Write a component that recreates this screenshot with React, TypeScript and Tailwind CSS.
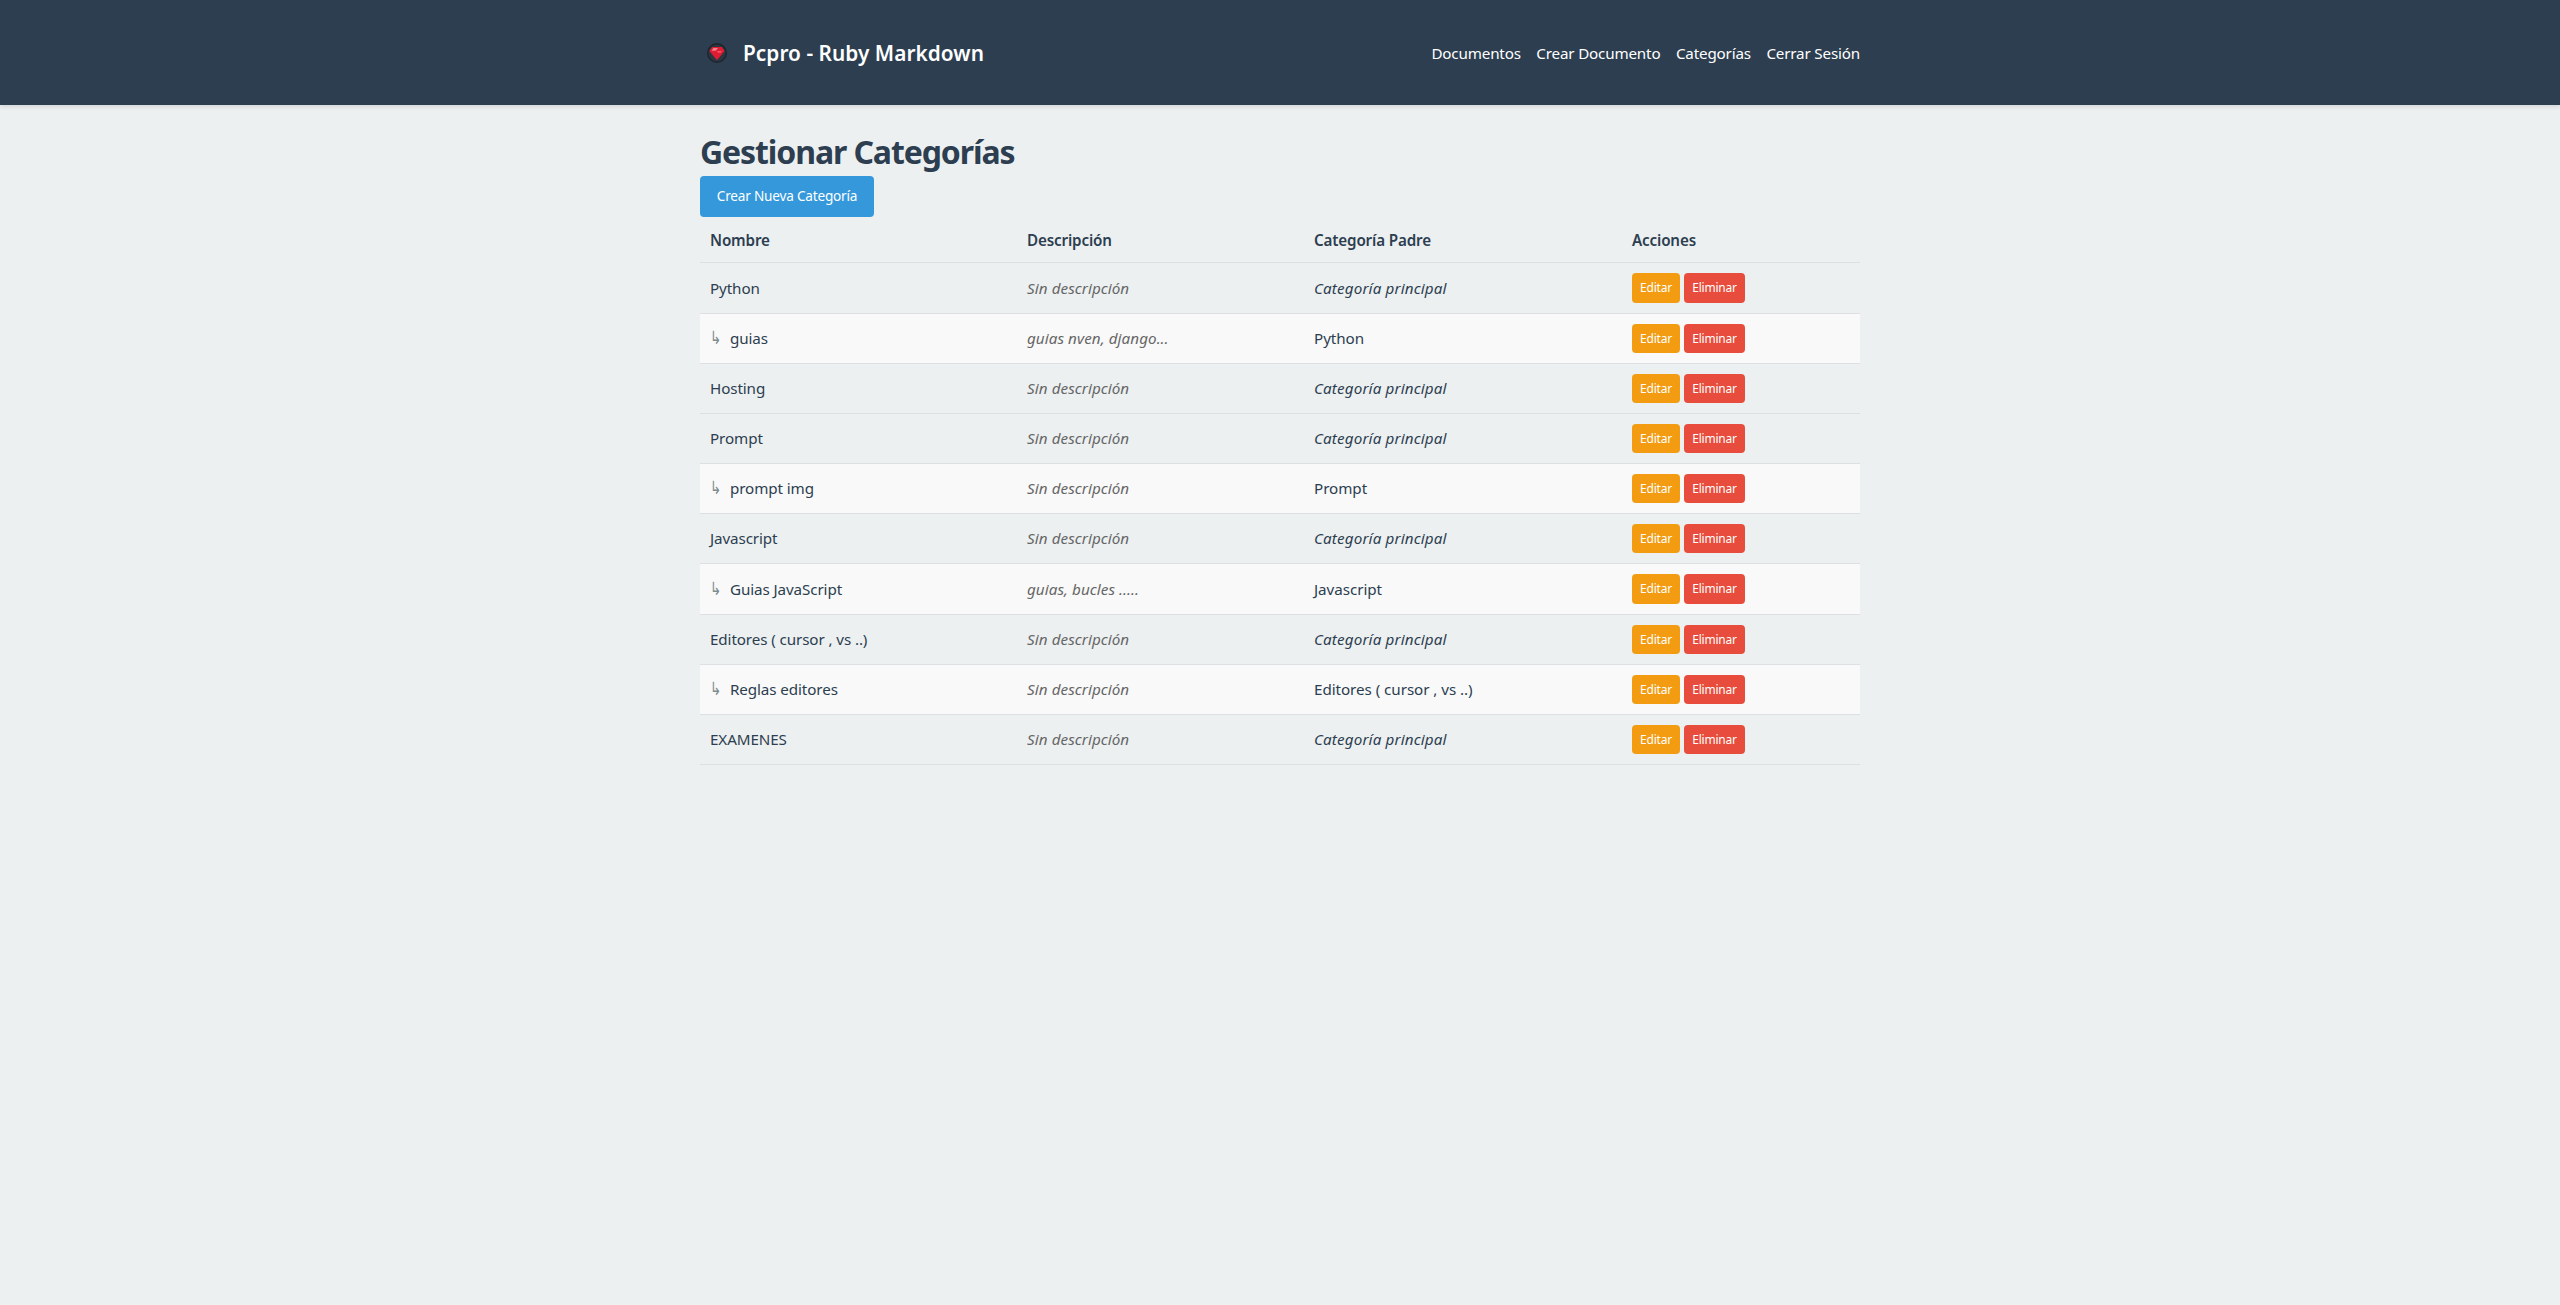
const rows: { name: string; child?: boolean; desc?: string; parent?: string; tall?: boolean }[] = [
  { name: "Python", tall: true },
  { name: "guias", child: true, desc: "guias nven, django...", parent: "Python" },
  { name: "Hosting" },
  { name: "Prompt" },
  { name: "prompt img", child: true, parent: "Prompt" },
  { name: "Javascript" },
  { name: "Guias JavaScript", child: true, desc: "guias, bucles .....", parent: "Javascript", tall: true },
  { name: "Editores ( cursor , vs ..)" },
  { name: "Reglas editores", child: true, parent: "Editores ( cursor , vs ..)" },
  { name: "EXAMENES" },
];

function Ruby() {
  return (
    <svg width="20" height="20" viewBox="0 0 20 20" className="shrink-0">
      <circle cx="10" cy="10" r="10" fill="#1e252d" />
      <circle cx="10" cy="10" r="8.6" fill="#2b3641" />
      <path d="M2.4 8 L5.2 4 H14.8 L17.6 8 L10.6 16.4 H9.4 Z" fill="#e01c33" />
      <path d="M4.6 7.8 L6.4 5 H11 L8.8 7.8 Z" fill="#f0808e" />
      <path d="M10.2 8.2 H15 L13.6 9.6 H10.6 Z" fill="#f56b7c" />
    </svg>
  );
}

const cell = "border-b border-[#dde0e3] pl-[10px] align-middle";

export default function App() {
  return (
    <div className="min-h-[1305px] bg-[#ecf0f1] font-['Noto_Sans','Open_Sans',sans-serif] text-[15.2px] text-[#2c3e50]">
      <header className="h-[105px] bg-[#2c3e50] shadow-[0_2px_4px_rgba(0,0,0,0.1)]">
        <div className="mx-auto flex h-full w-[1160px] items-center justify-between pt-[1px]">
          <div className="flex items-center gap-[16px] pl-[7px] text-[20.8px] font-semibold tracking-[0.05px] text-white">
            <Ruby />
            <span className="pt-[1px]">Pcpro - Ruby Markdown</span>
          </div>
          <nav className="flex gap-[15.5px] text-[15.2px] tracking-[-0.17px] text-white">
            <a>Documentos</a>
            <a>Crear Documento</a>
            <a>Categorías</a>
            <a>Cerrar Sesión</a>
          </nav>
        </div>
      </header>
      <main className="mx-auto w-[1160px]">
        <h1 className="mt-[25px] mb-[2px] text-[32px] leading-[44px] font-bold tracking-[-1.1px]">Gestionar Categorías</h1>
        <a className="flex h-[41px] w-[174px] items-center justify-center rounded-[4px] bg-[#3498db] text-[13.6px] tracking-[-0.2px] text-white">
          Crear Nueva Categoría
        </a>
        <table className="mt-[1px] w-[1160px] table-fixed border-separate border-spacing-0">
          <colgroup>
            <col className="w-[317px]" />
            <col className="w-[287px]" />
            <col className="w-[318px]" />
            <col className="w-[238px]" />
          </colgroup>
          <thead>
            <tr className="h-[45px] text-left tracking-[-0.15px]">
              <th className={`${cell} font-semibold`}>Nombre</th>
              <th className={`${cell} font-semibold`}>Descripción</th>
              <th className={`${cell} font-semibold`}>Categoría Padre</th>
              <th className={`${cell} font-semibold`}>Acciones</th>
            </tr>
          </thead>
          <tbody>
            {rows.map((r) => (
              <tr key={r.name} className={`${r.tall ? "h-[51px]" : "h-[50px]"} ${r.child ? "bg-[#f9f9f9]" : ""}`}>
                <td className={`${cell} tracking-[-0.1px]`}>
                  {r.child && (
                    <span className="inline-block w-[20px] origin-left scale-x-75 font-['DejaVu_Sans'] text-[18px] leading-none text-[#7f8c8d]">↳</span>
                  )}
                  {r.name}
                </td>
                <td className={`${cell} tracking-[0.08px] text-[#666666] italic`}>{r.desc ?? "Sin descripción"}</td>
                <td className={`${cell} ${r.parent ? "tracking-[-0.05px]" : "tracking-[0.15px] italic"}`}>{r.parent ?? "Categoría principal"}</td>
                <td className={cell}>
                  <div className="flex gap-[4px] text-[12px] tracking-[-0.2px] text-white">
                    <a className={`flex w-[48px] items-center justify-center rounded-[4px] bg-[#f39c12] ${r.tall ? "h-[30px]" : "h-[29px]"}`}>Editar</a>
                    <a className={`flex w-[61px] items-center justify-center rounded-[4px] bg-[#e74c3c] ${r.tall ? "h-[30px]" : "h-[29px]"}`}>Eliminar</a>
                  </div>
                </td>
              </tr>
            ))}
          </tbody>
        </table>
      </main>
    </div>
  );
}
